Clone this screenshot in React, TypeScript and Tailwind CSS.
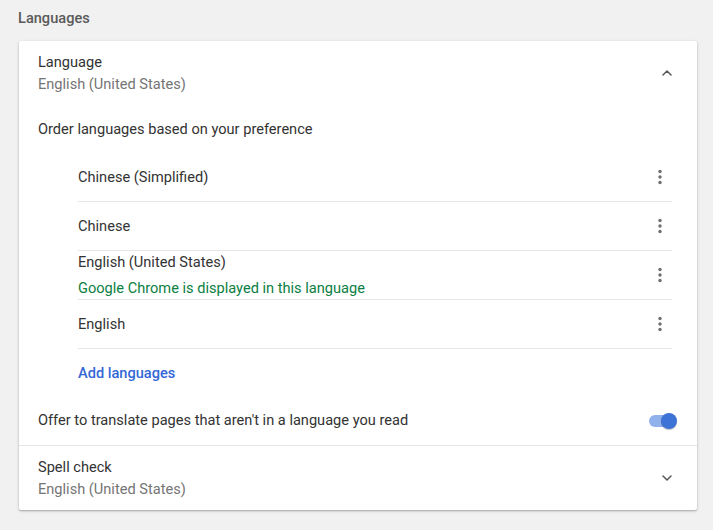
import { ChevronUp, ChevronDown } from 'lucide-react';

const langs = [
  { name: 'Chinese (Simplified)' },
  { name: 'Chinese' },
  { name: 'English (United States)', note: 'Google Chrome is displayed in this language' },
  { name: 'English' },
];

function MoreVert() {
  return (
    <svg width="20" height="20" viewBox="0 0 20 20" className="text-[#6e6e6e]">
      <circle cx="10" cy="4.5" r="1.7" fill="currentColor" />
      <circle cx="10" cy="10" r="1.7" fill="currentColor" />
      <circle cx="10" cy="15.5" r="1.7" fill="currentColor" />
    </svg>
  );
}

export default function App() {
  return (
    <div
      className="w-[713px] h-[530px] bg-[#f1f1f1] overflow-hidden text-[14.6px] text-[#333]"
      style={{ fontFamily: 'Roboto, "Liberation Sans", sans-serif' }}
    >
      <div className="pl-[18px] pt-[8px] h-[41px] font-medium text-[#5a5a5a] leading-[20px]">
        Languages
      </div>

      <div className="ml-[19px] w-[678px] bg-white rounded-[2px] shadow-[0_1px_2px_rgba(0,0,0,0.28),0_1px_4px_rgba(0,0,0,0.08)]">
        {/* Language row */}
        <div className="flex items-start pl-[19px] pr-[22px] pt-[10px] h-[76px]">
          <div className="flex-1 leading-[22px]">
            <div>Language</div>
            <div className="text-[#757575]">English (United States)</div>
          </div>
          <ChevronUp size={16} strokeWidth={2.2} className="text-[#555] mt-[14px]" />
        </div>

        <div className="pl-[19px] pt-[1px] leading-[22px] h-[36px]">
          Order languages based on your preference
        </div>

        <div className="pl-[59px] pr-[25px]">
          {langs.map((l) => (
            <div key={l.name} className="flex items-center h-[49px] border-b border-[#e6e6e6]">
              <div className="flex-1 flex flex-col gap-[6px] leading-[20px]">
                <div>{l.name}</div>
                {l.note && <div className="text-[#0b8043]">{l.note}</div>}
              </div>
              <div className="mr-[2px]">
                <MoreVert />
              </div>
            </div>
          ))}
          <div className="h-[48px] flex items-center pt-[2px] font-medium text-[#3367d6]">
            Add languages
          </div>
        </div>

        <div className="flex items-center h-[48px] pl-[19px] pr-[20px]">
          <div className="flex-1">Offer to translate pages that aren't in a language you read</div>
          <div className="relative w-[28px] h-[16px] flex items-center">
            <div className="w-[26px] h-[12px] rounded-full bg-[#90b1ec]" />
            <div className="absolute right-0 top-0 w-[16px] h-[16px] rounded-full bg-[#3d72d6] shadow-[0_1px_1px_rgba(0,0,0,0.25)]" />
          </div>
        </div>

        <div className="flex items-center pl-[19px] pr-[22px] h-[65px] border-t border-[#e6e6e6]">
          <div className="flex-1 leading-[22px]">
            <div>Spell check</div>
            <div className="text-[#757575]">English (United States)</div>
          </div>
          <ChevronDown size={16} strokeWidth={2.2} className="text-[#555]" />
        </div>
      </div>
    </div>
  );
}
